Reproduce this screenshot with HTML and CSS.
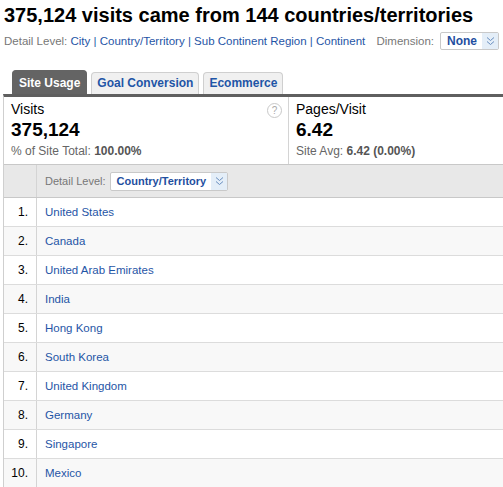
FILE: index.html
```html
<!DOCTYPE html>
<html>
<head>
<meta charset="utf-8">
<link rel="stylesheet" href="styles.css">
</head>
<body>
<h1 class="title">375,124 visits came from 144 countries/territories</h1>
<div class="detail">
  <div class="levels"><span class="muted">Detail Level:</span> <a>City</a> | <a>Country/Territory</a> | <a>Sub Continent Region</a> | <a>Continent</a></div>
  <div class="dim"><span class="muted">Dimension:</span>
    <span class="select sel-none"><span class="sel-text">None</span><span class="sel-arrow"><svg width="9" height="10" viewBox="0 0 9 10"><path d="M1 1.5 L4.5 4.5 L8 1.5 M1 5.5 L4.5 8.5 L8 5.5" fill="none" stroke="#6a8fc0" stroke-width="1"/></svg></span></span>
  </div>
</div>
<div class="tabs">
  <div class="tab active">Site Usage</div>
  <div class="tab">Goal Conversion</div>
  <div class="tab">Ecommerce</div>
</div>
<div class="panel">
  <div class="metrics">
    <div class="metric first">
      <div class="m-label">Visits</div>
      <div class="m-value">375,124</div>
      <div class="m-sub">% of Site Total: <b>100.00%</b></div>
      <span class="help">?</span>
    </div>
    <div class="metric">
      <div class="m-label">Pages/Visit</div>
      <div class="m-value">6.42</div>
      <div class="m-sub">Site Avg: <b>6.42 (0.00%)</b></div>
    </div>
  </div>
  <div class="row head">
    <div class="num"></div>
    <div class="name"><span class="muted">Detail Level:</span>
      <span class="select sel-country"><span class="sel-text">Country/Territory</span><span class="sel-arrow"><svg width="9" height="10" viewBox="0 0 9 10"><path d="M1 1.5 L4.5 4.5 L8 1.5 M1 5.5 L4.5 8.5 L8 5.5" fill="none" stroke="#6a8fc0" stroke-width="1"/></svg></span></span>
    </div>
  </div>
  <div class="row"><div class="num">1.</div><div class="name"><a>United States</a></div></div>
  <div class="row alt"><div class="num">2.</div><div class="name"><a>Canada</a></div></div>
  <div class="row"><div class="num">3.</div><div class="name"><a>United Arab Emirates</a></div></div>
  <div class="row alt"><div class="num">4.</div><div class="name"><a>India</a></div></div>
  <div class="row"><div class="num">5.</div><div class="name"><a>Hong Kong</a></div></div>
  <div class="row alt"><div class="num">6.</div><div class="name"><a>South Korea</a></div></div>
  <div class="row"><div class="num">7.</div><div class="name"><a>United Kingdom</a></div></div>
  <div class="row alt"><div class="num">8.</div><div class="name"><a>Germany</a></div></div>
  <div class="row"><div class="num">9.</div><div class="name"><a>Singapore</a></div></div>
  <div class="row alt"><div class="num">10.</div><div class="name"><a>Mexico</a></div></div>
</div>
</body>
</html>
```
FILE: styles.css
```css
html, body { margin: 0; padding: 0; background: #fff; }
body {
  font-family: "Liberation Sans", Arial, Helvetica, sans-serif;
  color: #000;
  padding-left: 3px;
  overflow: hidden;
}
a { color: #1f55a6; text-decoration: none; }
.muted { color: #777; }

.title {
  font-size: 20px;
  font-weight: bold;
  margin: 0;
  padding: 4px 0 0 1px;
  line-height: 22px;
}
.detail {
  display: flex;
  justify-content: space-between;
  align-items: center;
  font-size: 11.5px;
  margin-top: 6px;
  padding-left: 1px;
  padding-right: 4px;
  color: #1f55a6;
  white-space: nowrap;
}
.dim { display: flex; align-items: center; gap: 6px; }

.select {
  display: inline-flex;
  align-items: stretch;
  background: #fff;
  border: 1px solid #c9c9c9;
  border-radius: 2px;
  height: 16px;
  vertical-align: middle;
}
.sel-text {
  font-weight: bold;
  color: #1f4fa0;
  padding: 0 6px;
  line-height: 16px;
  font-size: 11.5px;
}
.sel-none .sel-text { padding: 0 5px 0 6px; font-size: 12px; }
.sel-arrow {
  width: 16px;
  background: #e4eef8;
  display: flex;
  align-items: center;
  justify-content: center;
}

.tabs {
  display: flex;
  gap: 4px;
  margin-top: 20px;
  margin-left: 9px;
  align-items: flex-end;
}
.tab {
  font-size: 12px;
  font-weight: bold;
  color: #1f55a6;
  background: #f0f0f0;
  border: 1px solid #cfcfcf;
  border-bottom: none;
  border-radius: 4px 4px 0 0;
  height: 21px;
  line-height: 21px;
  padding: 0 5px;
}
.tab.active {
  background: #646464;
  border-color: #646464;
  color: #fff;
  height: 23px;
  line-height: 24px;
  padding: 0 6px;
}

.panel {
  border-top: 3px solid #5f5f5f;
  border-left: 1px solid #cfcfcf;
}
.metrics {
  display: grid;
  grid-template-columns: 285px 1fr;
  height: 67px;
}
.metric {
  position: relative;
  padding: 4px 0 0 7px;
}
.metric.first { border-right: 1px solid #d4d4d4; }
.m-label { font-size: 14px; line-height: 16px; }
.m-value { font-size: 19px; font-weight: bold; line-height: 20px; margin-top: 3px; }
.m-sub { font-size: 12px; color: #666; margin-top: 4px; line-height: 14px; }
.m-sub b { color: #555; }
.help {
  position: absolute;
  right: 6px;
  top: 6px;
  width: 13px;
  height: 13px;
  border: 1px solid #c8c8c8;
  border-radius: 50%;
  font-size: 10px;
  line-height: 13px;
  text-align: center;
  color: #aaa;
}

.row {
  display: flex;
  height: 28px;
  border-bottom: 1px solid #dcdcdc;
  font-size: 11.5px;
  align-items: stretch;
}
.row.alt { background: #f8f8f8; }
.row.head {
  background: #e8e8e8;
  border-top: 1px solid #c8c8c8;
  border-bottom: 1px solid #c8c8c8;
  height: 32px;
  font-size: 11px;
}
.num {
  width: 33px;
  border-right: 1px solid #d4d4d4;
  text-align: right;
  padding-right: 8px;
  box-sizing: border-box;
  display: flex;
  align-items: center;
  justify-content: flex-end;
  font-size: 12px;
}
.name {
  padding-left: 8px;
  display: flex;
  align-items: center;
  gap: 4px;
}
.head .sel-country .sel-text { font-size: 11px; padding: 0 5px 0 6px; }
.head .select { height: 17px; }
.head .sel-text { line-height: 17px; }
```
